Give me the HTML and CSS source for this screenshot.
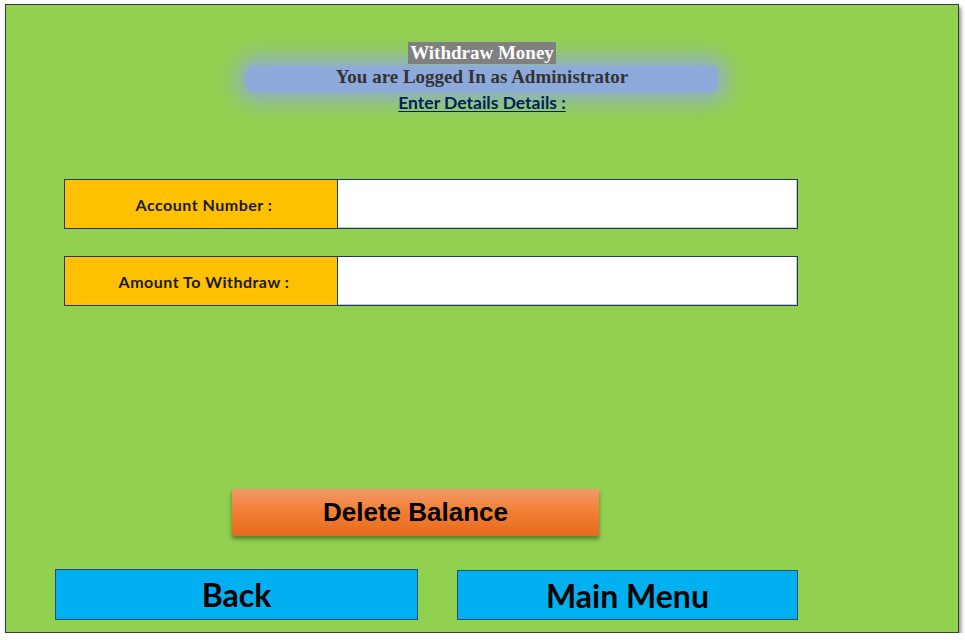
FILE: index.html
```html
<!DOCTYPE html>
<html lang="en">
<head>
<meta charset="utf-8">
<title>Withdraw Money</title>
<link rel="stylesheet" href="styles.css">
</head>
<body>
<div class="panel">
  <div class="header">
    <div class="title-line"><span class="title">Withdraw Money</span></div>
    <div class="subtitle">You are Logged In as Administrator</div>
    <div class="details">Enter Details Details :</div>
  </div>
  <div class="form">
    <div class="row">
      <div class="label">Account Number :</div>
      <div class="input"></div>
    </div>
    <div class="row">
      <div class="label">Amount To Withdraw :</div>
      <div class="input"></div>
    </div>
  </div>
  <div class="delete-wrap">
    <div class="delete-btn">Delete Balance</div>
  </div>
  <div class="nav">
    <div class="nav-btn back">Back</div>
    <div class="nav-btn menu">Main Menu</div>
  </div>
</div>
</body>
</html>
```
FILE: styles.css
```css
html, body {
  margin: 0;
  padding: 0;
  background: #ffffff;
}

.panel {
  margin: 4px 0 0 5px;
  width: 954px;
  height: 629px;
  box-sizing: border-box;
  border: 1px solid #3a3a3a;
  background: #92d050;
  box-shadow: 2px 3px 4px rgba(0, 0, 0, 0.45);
  display: flex;
  flex-direction: column;
}

.header {
  height: 109px;
  box-sizing: border-box;
  padding-top: 37px;
  display: flex;
  flex-direction: column;
  align-items: center;
}

.title-line {
  height: 22px;
  line-height: 22px;
  position: relative;
  z-index: 1;
}

.title {
  display: inline-block;
  background: #808080;
  color: #ffffff;
  font: bold 19px "Liberation Serif", serif;
  padding: 0 2px;
  height: 22px;
  line-height: 22px;
}

.subtitle {
  margin-top: 2px;
  width: 472px;
  height: 26px;
  line-height: 24px;
  text-align: center;
  background: #8eaadb;
  border-radius: 8px;
  box-shadow: 0 0 22px 8px #8eaadb;
  color: #333333;
  font: bold 19px "Liberation Serif", serif;
}

.details {
  margin-top: 0;
  height: 22px;
  line-height: 22px;
  color: #002060;
  font: bold 17.5px Lato, "Noto Sans", sans-serif;
  text-decoration: underline;
  text-underline-offset: 2px;
}

.form {
  margin: 65px 0 0 58px;
  display: flex;
  flex-direction: column;
  gap: 27px;
}

.row {
  display: flex;
  height: 50px;
}

.label {
  width: 274px;
  box-sizing: border-box;
  border: 1px solid #1f3864;
  background: #ffc000;
  color: #1a1a1a;
  font: bold 16px Lato, "Noto Sans", sans-serif;
  letter-spacing: 0.5px;
  display: flex;
  align-items: center;
  justify-content: center;
  padding-left: 6px;
}

.input {
  width: 461px;
  box-sizing: border-box;
  border: 1px solid #1f3864;
  margin-left: -1px;
  background: #ffffff;
  box-shadow: inset -1px -1px 0 #c9c9c9;
}

.delete-wrap {
  margin: 183px 0 0 226px;
}

.delete-btn {
  width: 367px;
  height: 47px;
  box-sizing: border-box;
  background: linear-gradient(#f3996a 0%, #f38037 45%, #e56a1b 100%);
  box-shadow: 0 3px 4px rgba(0, 0, 0, 0.4);
  color: #000000;
  font: bold 26px "Liberation Sans", Arial, sans-serif;
  display: flex;
  align-items: center;
  justify-content: center;
}

.nav {
  margin: 33px 0 0 49px;
  display: flex;
  gap: 39px;
  align-items: flex-start;
}

.nav-btn {
  height: 51px;
  box-sizing: border-box;
  background: #00b0f0;
  border: 1px solid #1f4e79;
  color: #000000;
  font: bold 32px Lato, "Noto Sans", sans-serif;
  display: flex;
  align-items: center;
  justify-content: center;
}

.back {
  width: 363px;
}

.menu {
  width: 341px;
  margin-top: 1px;
  height: 50px;
}
```
